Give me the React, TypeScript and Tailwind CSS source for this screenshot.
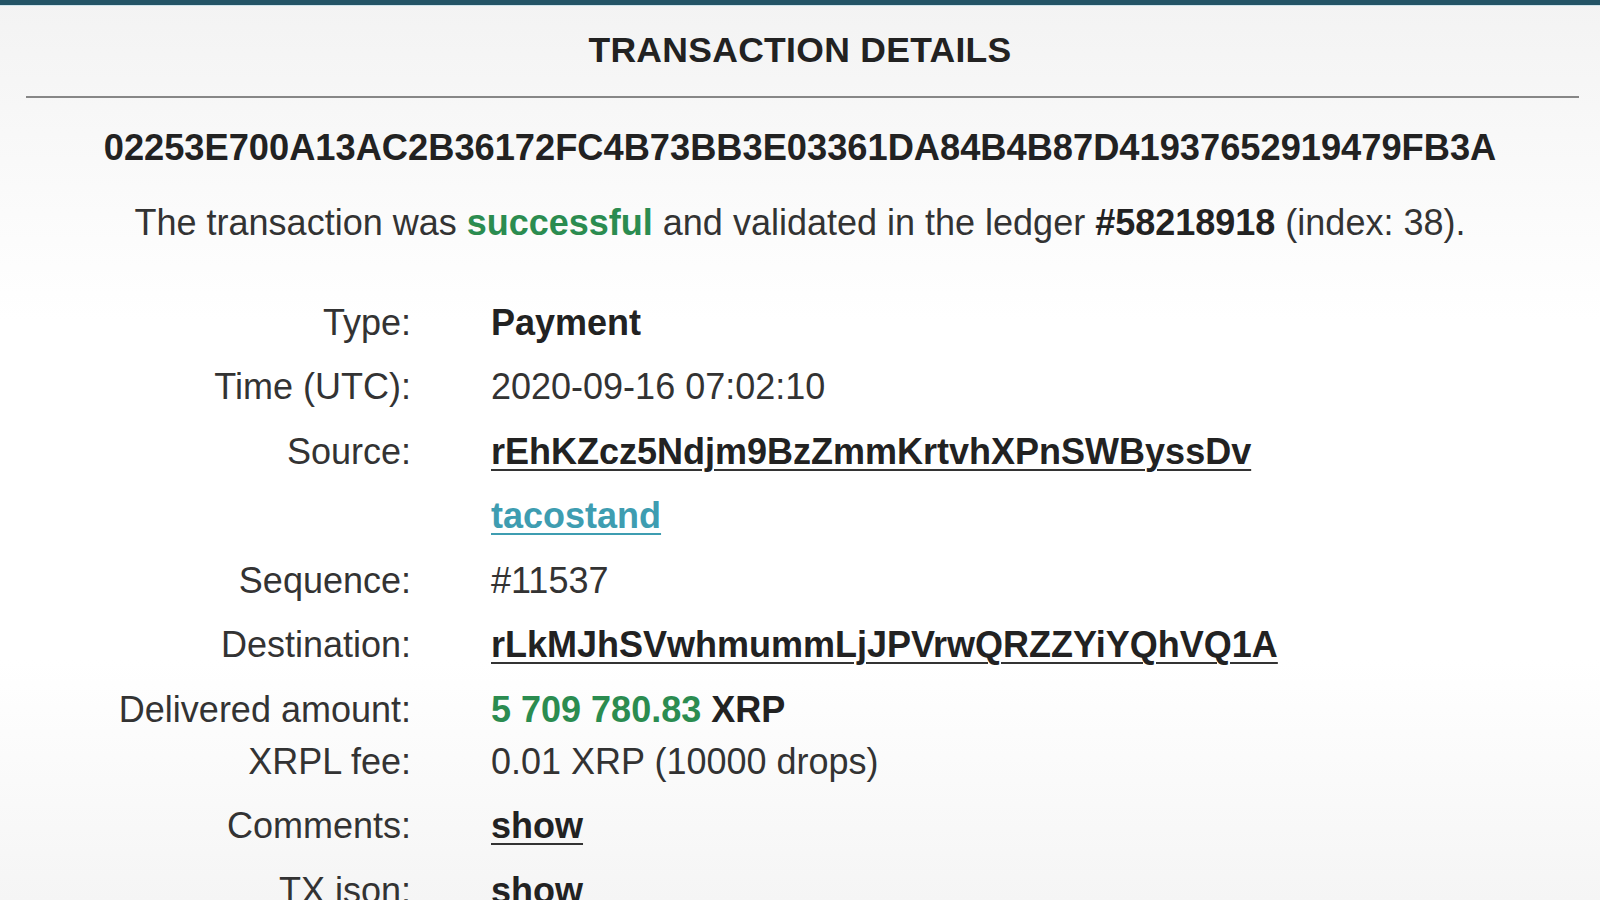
import React from "react";

const rowLabel = "w-[411px] shrink-0 text-right text-[#333]";
const rowValue = "pl-[80px] text-[#333]";

function Row({
  label,
  children,
  h = "h-[64.5px]",
}: {
  label: string;
  children?: React.ReactNode;
  h?: string;
}) {
  return (
    <div className={`flex items-start ${h} leading-[64.5px]`}>
      <div className={rowLabel}>{label}</div>
      <div className={rowValue}>{children}</div>
    </div>
  );
}

const link =
  "font-bold text-[#222] underline decoration-2 underline-offset-[5px] decoration-[#333]";

export default function App() {
  return (
    <div
      className="min-h-screen w-full overflow-hidden bg-[linear-gradient(to_bottom,#f3f3f3_0px,#ffffff_320px,#ffffff_660px,#f5f5f5_900px)] text-[36px] text-[#333]"
      style={{ fontFamily: '"Liberation Sans", Arial, sans-serif', height: 900 }}
    >
      <div className="h-[5px] bg-[#245466]" />
      <div className="h-[1px] bg-[#cfe4ec]" />
      <div className="mt-[24px] text-center text-[35.5px] font-bold leading-[40px] tracking-[0.3px] text-[#222]">
        TRANSACTION DETAILS
      </div>
      <div className="ml-[26px] mr-[21px] mt-[26px] h-[2px] bg-[#878787]" />
      <div className="mt-[26px] text-center text-[36.25px] font-bold leading-[48px] text-[#222]">
        02253E700A13AC2B36172FC4B73BB3E03361DA84B4B87D41937652919479FB3A
      </div>
      <div className="mt-[27px] text-center leading-[48px]">
        The transaction was{" "}
        <span className="font-bold text-[#2b8c50]">successful</span> and validated in
        the ledger <span className="font-bold text-[#222]">#58218918</span> (index: 38).
      </div>
      <div className="mt-[43.5px]">
        <Row label="Type:">
          <span className="font-bold text-[#222]">Payment</span>
        </Row>
        <Row label="Time (UTC):">2020-09-16 07:02:10</Row>
        <Row label="Source:">
          <span className={link}>rEhKZcz5Ndjm9BzZmmKrtvhXPnSWByssDv</span>
        </Row>
        <Row label="">
          <span className="font-bold text-[#3e9db1] underline decoration-2 underline-offset-[5px] decoration-[#3e9db1]">
            tacostand
          </span>
        </Row>
        <Row label="Sequence:">#11537</Row>
        <Row label="Destination:">
          <span className={link}>rLkMJhSVwhmummLjJPVrwQRZZYiYQhVQ1A</span>
        </Row>
        <Row label="Delivered amount:" h="h-[52px]">
          <span className="font-bold text-[#2b8c50]">5 709 780.83</span>{" "}
          <span className="font-bold text-[#222]">XRP</span>
        </Row>
        <Row label="XRPL fee:">0.01 XRP (10000 drops)</Row>
        <Row label="Comments:">
          <span className={link}>show</span>
        </Row>
        <Row label="TX json:">
          <span className={link}>show</span>
        </Row>
      </div>
    </div>
  );
}
